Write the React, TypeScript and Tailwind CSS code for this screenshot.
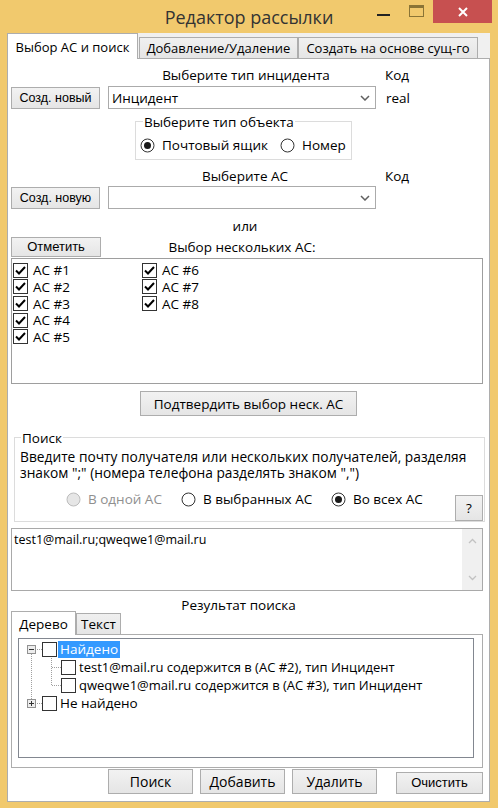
import React from "react";

function Btn({ children, className = "" }: { children: React.ReactNode; className?: string }) {
  return (
    <div
      className={
        "flex shrink-0 items-center justify-center border border-[#ADADAD] bg-[linear-gradient(#F2F2F2,#E5E5E5)] text-black " +
        className
      }
    >
      {children}
    </div>
  );
}

function Check({ checked = false }: { checked?: boolean }) {
  return (
    <svg width="15" height="15" viewBox="0 0 15 15" className="shrink-0">
      <rect x="0.5" y="0.5" width="14" height="14" fill="#fff" stroke="#333" />
      {checked && <path d="M3 7.5 L6 10.5 L12 4" fill="none" stroke="#000" strokeWidth="2" />}
    </svg>
  );
}

function Radio({ checked = false, disabled = false }: { checked?: boolean; disabled?: boolean }) {
  return (
    <svg width="15" height="15" viewBox="0 0 15 15" className="shrink-0">
      <circle cx="7.5" cy="7.5" r="6.5" fill={disabled ? "#E6E6E6" : "#fff"} stroke={disabled ? "#BCBCBC" : "#333"} />
      {checked && <circle cx="7.5" cy="7.5" r="3.5" fill="#1A1A1A" />}
    </svg>
  );
}

function Combo({ value, className = "" }: { value: string; className?: string }) {
  return (
    <div className={"flex shrink-0 items-center border border-[#ABABAB] bg-white " + className}>
      <span className="flex-1 pl-[3px]">{value}</span>
      <svg width="10" height="6" viewBox="0 0 10 6" className="mr-[5px]">
        <path d="M1 1L5 5L9 1" fill="none" stroke="#606060" strokeWidth="1.5" />
      </svg>
    </div>
  );
}

function Expander({ open }: { open: boolean }) {
  return (
    <svg width="9" height="9" viewBox="0 0 9 9" className="shrink-0">
      <rect x="0.5" y="0.5" width="8" height="8" fill="#EDEDED" stroke="#919191" />
      <path d="M2 4.5H7" stroke="#333" strokeWidth="1" />
      {!open && <path d="M4.5 2V7" stroke="#333" strokeWidth="1" />}
    </svg>
  );
}

export default function App() {
  const col1 = [1, 2, 3, 4, 5];
  const col2 = [6, 7, 8];
  return (
    <div className="w-[498px] h-[808px] bg-[#F1C96D] flex flex-col overflow-hidden font-['Open_Sans',sans-serif] text-[13.5px] leading-[16px] text-black">
      {/* title bar */}
      <div className="relative h-[33px] shrink-0 flex items-center justify-center">
        <span className="text-[18px] leading-[22px] text-[#333]">Редактор рассылки</span>
        <div className="absolute right-[6px] top-0 flex items-start">
          <div className="mt-[14px] w-[13px] h-[2px] bg-[#222]" />
          <div className="ml-[19px] mt-[5px] w-[15px] h-[12px] border border-t-[3px] border-[#8A7436]" />
          <div className="ml-[9px] w-[59px] h-[23px] bg-[#C75050] flex items-center justify-center">
            <svg width="10" height="10" viewBox="0 0 10 10">
              <path d="M1 1L9 9M9 1L1 9" stroke="#fff" strokeWidth="2" />
            </svg>
          </div>
        </div>
      </div>

      {/* client area */}
      <div className="ml-[7px] w-[483px] h-[769px] flex flex-col">
        {/* tab header */}
        <div className="h-[25px] shrink-0 bg-[#F0F0F0] flex items-end text-[13px]">
          <div className="relative z-10 -mb-px w-[131px] h-[26px] bg-white border border-b-0 border-[#ADADAD] flex items-center justify-center whitespace-nowrap">
            Выбор АС и поиск
          </div>
          <div className="ml-[1px] w-[159px] h-[21px] bg-[linear-gradient(#F0F0F0,#E5E5E5)] border border-b-0 border-[#ADADAD] flex items-center justify-center whitespace-nowrap">
            Добавление/Удаление
          </div>
          <div className="w-[180px] h-[21px] bg-[linear-gradient(#F0F0F0,#E5E5E5)] border border-b-0 border-[#ADADAD] flex items-center justify-center whitespace-nowrap">
            Создать на основе сущ-го
          </div>
        </div>

        {/* tab page */}
        <div className="flex-1 border border-[#ADADAD] bg-white flex flex-col">
          {/* labels row */}
          <div className="mt-[8px] h-[16px] flex">
            <div className="w-[100px]" />
            <div className="w-[268px] text-center pl-[8px]">Выберите тип инцидента</div>
            <div className="ml-[9px]">Код</div>
          </div>
          <div className="mt-[3px] h-[23px] flex items-center">
            <Btn className="ml-[3px] w-[89px] h-[22px] font-['Liberation_Sans',Arial,sans-serif] text-[12.5px]">Созд. новый</Btn>
            <Combo className="ml-[8px] w-[268px] h-[23px]" value="Инцидент" />
            <div className="ml-[10px]">real</div>
          </div>

          {/* object type group */}
          <div className="relative mt-[12px] ml-[127px] w-[217px] h-[39px] border border-[#DCDCDC] pt-[15px] pl-[4px]">
            <span className="absolute left-[7px] -top-[8px] bg-white px-[1px]">Выберите тип объекта</span>
            <div className="flex items-center h-[16px]">
              <div className="w-[140px] flex items-center">
                <Radio checked />
                <span className="ml-[7px] whitespace-nowrap">Почтовый ящик</span>
              </div>
              <div className="flex items-center">
                <Radio />
                <span className="ml-[7px]">Номер</span>
              </div>
            </div>
          </div>

          <div className="mt-[8px] h-[16px] flex">
            <div className="w-[100px]" />
            <div className="w-[268px] text-center pl-[6px]">Выберите АС</div>
            <div className="ml-[9px]">Код</div>
          </div>
          <div className="mt-[2px] h-[23px] flex items-center">
            <Btn className="ml-[3px] w-[89px] h-[22px] font-['Liberation_Sans',Arial,sans-serif] text-[12.5px]">Созд. новую</Btn>
            <Combo className="ml-[8px] w-[268px] h-[23px]" value="" />
          </div>

          <div className="mt-[9px] h-[16px] flex">
            <div className="w-[100px]" />
            <div className="w-[268px] text-center pl-[6px]">или</div>
          </div>

          <div className="mt-[3px] h-[20px] flex items-center">
            <Btn className="ml-[3px] w-[90px] h-[20px] font-['Liberation_Sans',Arial,sans-serif] text-[13px]">Отметить</Btn>
            <div className="ml-[7px] w-[268px] text-center">Выбор нескольких АС:</div>
          </div>

          {/* checked list */}
          <div className="mt-[1px] ml-[3px] w-[472px] h-[126px] shrink-0 border border-[#9E9E9E] pt-[3px] pl-[1px] flex">
            <div className="w-[129px] flex flex-col">
              {col1.map((n) => (
                <div key={n} className="h-[16.67px] leading-[16px] flex items-center">
                  <Check checked />
                  <span className="ml-[5px]">АС #{n}</span>
                </div>
              ))}
            </div>
            <div className="w-[129px] flex flex-col">
              {col2.map((n) => (
                <div key={n} className="h-[16.67px] leading-[16px] flex items-center">
                  <Check checked />
                  <span className="ml-[5px]">АС #{n}</span>
                </div>
              ))}
            </div>
          </div>

          <Btn className="mt-[7px] ml-[132px] w-[217px] h-[25px]">Подтвердить выбор неск. АС</Btn>

          {/* search group */}
          <div className="relative mt-[21px] ml-[6px] w-[471px] h-[85px] shrink-0 border border-[#DCDCDC] pl-[5px] pt-[11px] flex flex-col">
            <span className="absolute left-[6px] -top-[8px] bg-white px-[1px]">Поиск</span>
            <div className="whitespace-nowrap text-[13.75px]">
              <div className="h-[16px]">Введите почту получателя или нескольких получателей, разделяя</div>
              <div className="h-[16px]">знаком ";" (номера телефона разделять знаком ",")</div>
            </div>
            <div className="mt-[10px] flex items-start">
              <div className="ml-[46px] h-[16px] flex items-center">
                <div className="w-[115px] flex items-center">
                  <Radio disabled />
                  <span className="ml-[7px] text-[#8F8F8F]">В одной АС</span>
                </div>
                <div className="w-[150px] flex items-center">
                  <Radio />
                  <span className="ml-[7px] whitespace-nowrap">В выбранных АС</span>
                </div>
                <div className="flex items-center">
                  <Radio checked />
                  <span className="ml-[7px] whitespace-nowrap">Во всех АС</span>
                </div>
              </div>
              <Btn className="ml-auto mr-[1px] mt-[4px] w-[28px] h-[26px]">?</Btn>
            </div>
          </div>

          {/* recipients textbox */}
          <div className="mt-[6px] ml-[3px] w-[472px] h-[63px] shrink-0 border border-[#A9A9A9] flex">
            <div className="flex-1 pl-[2px] pt-[3px] text-[12.5px]">test1@mail.ru;qweqwe1@mail.ru</div>
            <div className="w-[20px] bg-[#F0F0F0] flex flex-col items-center justify-between py-[9px]">
              <svg width="9" height="6" viewBox="0 0 9 6">
                <path d="M1 5L4.5 1.5L8 5" fill="none" stroke="#C2C2C2" strokeWidth="1.3" />
              </svg>
              <svg width="9" height="6" viewBox="0 0 9 6">
                <path d="M1 1L4.5 4.5L8 1" fill="none" stroke="#C2C2C2" strokeWidth="1.3" />
              </svg>
            </div>
          </div>

          <div className="mt-[7px] h-[14px] leading-[14px] text-center pr-[20px]">Результат поиска</div>

          {/* inner tab control */}
          <div className="-mt-px ml-[3px] w-[472px] flex flex-col">
            <div className="h-[23px] flex items-end">
              <div className="relative z-10 -mb-px w-[65px] h-[24px] bg-white border border-b-0 border-[#ADADAD] flex items-center justify-center">
                Дерево
              </div>
              <div className="w-[45px] h-[21px] bg-[linear-gradient(#F0F0F0,#E5E5E5)] border border-b-0 border-[#ADADAD] flex items-center justify-center">
                Текст
              </div>
            </div>
            <div className="h-[134px] border border-[#ADADAD] bg-white pl-[6px] pt-[3px]">
              <div className="relative w-[456px] h-[120px] border border-[#828790] pt-[1px] text-[13px]">
                <svg className="absolute left-0 top-0" width="454" height="118">
                  <g stroke="#A0A0A0" strokeDasharray="1 1" fill="none">
                    <path d="M12.5 15V60" />
                    <path d="M18 10.5H23" />
                    <path d="M18 64.5H23" />
                    <path d="M32.5 19V46" />
                    <path d="M33 28.5H42" />
                    <path d="M33 46.5H42" />
                  </g>
                </svg>
                <div className="relative h-[18px] flex items-center">
                  <div className="ml-[8px]"><Expander open /></div>
                  <div className="ml-[6px]"><Check /></div>
                  <span className="ml-[1px] px-[2px] h-[17px] leading-[17px] bg-[#3399FF] text-white text-[13.5px]">Найдено</span>
                </div>
                <div className="relative h-[18px] flex items-center">
                  <div className="ml-[42px]"><Check /></div>
                  <span className="ml-[3px] whitespace-nowrap">test1@mail.ru содержится в (АС #2), тип Инцидент</span>
                </div>
                <div className="relative h-[18px] flex items-center">
                  <div className="ml-[42px]"><Check /></div>
                  <span className="ml-[3px] whitespace-nowrap">qweqwe1@mail.ru содержится в (АС #3), тип Инцидент</span>
                </div>
                <div className="relative h-[18px] flex items-center">
                  <div className="ml-[8px]"><Expander open={false} /></div>
                  <div className="ml-[6px]"><Check /></div>
                  <span className="ml-[1px] px-[2px] text-[13.5px]">Не найдено</span>
                </div>
              </div>
            </div>
          </div>

          {/* bottom buttons */}
          <div className="mt-[1px] h-[25px] flex items-start text-[14px]">
            <Btn className="ml-[100px] w-[85px] h-[25px]">Поиск</Btn>
            <Btn className="ml-[7px] w-[85px] h-[25px]">Добавить</Btn>
            <Btn className="ml-[7px] w-[85px] h-[25px]">Удалить</Btn>
            <Btn className="ml-[19px] mt-[3px] w-[87px] h-[22px] font-['Liberation_Sans',Arial,sans-serif] text-[13px]">Очистить</Btn>
          </div>
        </div>
      </div>
    </div>
  );
}
